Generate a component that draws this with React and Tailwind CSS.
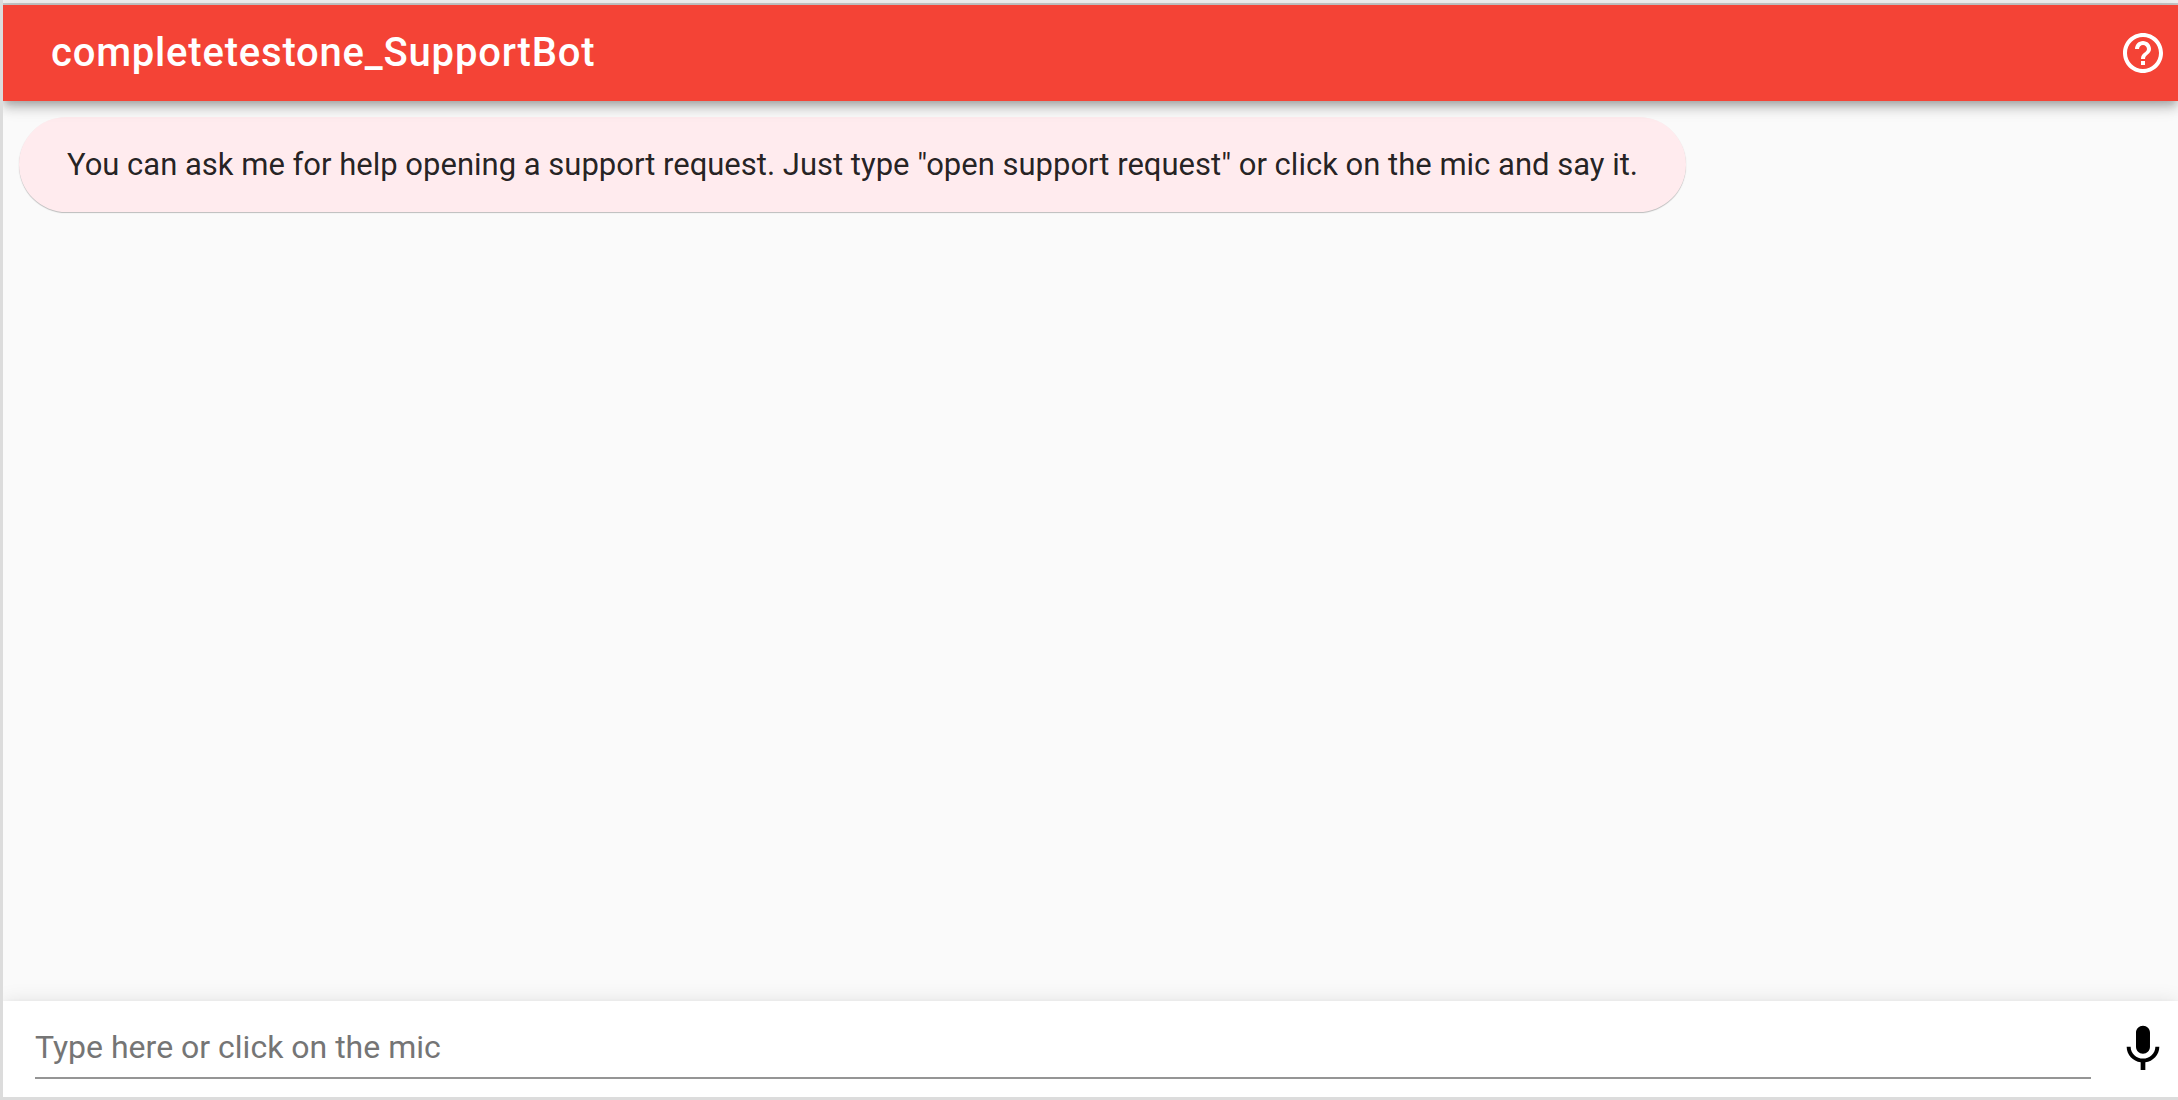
import { MdHelpOutline, MdMic } from "react-icons/md";

export default function App() {
  return (
    <div className="flex h-screen flex-col overflow-hidden border-b-3 border-l-3 border-[#dcdcdc] bg-[#fafafa] font-[Roboto,sans-serif] text-black/87">
      <div className="h-[5px] shrink-0 border-b-2 border-[#c8c8c8] bg-[#f2f2f2]" />
      <header className="z-10 flex h-24 shrink-0 items-center justify-between bg-[#f44336] pr-[11px] pl-12 text-white shadow-[0_4px_8px_-2px_rgba(0,0,0,0.2),0_8px_10px_0_rgba(0,0,0,0.14),0_2px_20px_0_rgba(0,0,0,0.12)]">
        <h1 className="text-[40px] font-medium tracking-[0.02em]">completetestone_SupportBot</h1>
        <button type="button" aria-label="Help"><MdHelpOutline size={48} /></button>
      </header>
      <main className="flex-1 p-4">
        <p className="w-fit rounded-full bg-[#ffebee] px-12 py-6 text-[31px] leading-[47px] shadow-[0_1px_1px_rgba(0,0,0,0.25)]">
          You can ask me for help opening a support request. Just type "open support request" or click on the mic and say it.
        </p>
      </main>
      <footer className="flex h-24 shrink-0 items-center gap-6 bg-white pr-[7px] pl-8 shadow-[0_4px_8px_-2px_rgba(0,0,0,0.2),0_8px_10px_0_rgba(0,0,0,0.14),0_2px_20px_0_rgba(0,0,0,0.12)]">
        <input type="text" aria-label="Message" placeholder="Type here or click on the mic" className="h-15 min-w-0 flex-1 border-b-2 border-[#959595] pb-0.5 text-[32px] outline-none placeholder:text-[#757575]" />
        <button type="button" aria-label="Speak" className="text-black"><MdMic size={56} /></button>
      </footer>
    </div>
  );
}
